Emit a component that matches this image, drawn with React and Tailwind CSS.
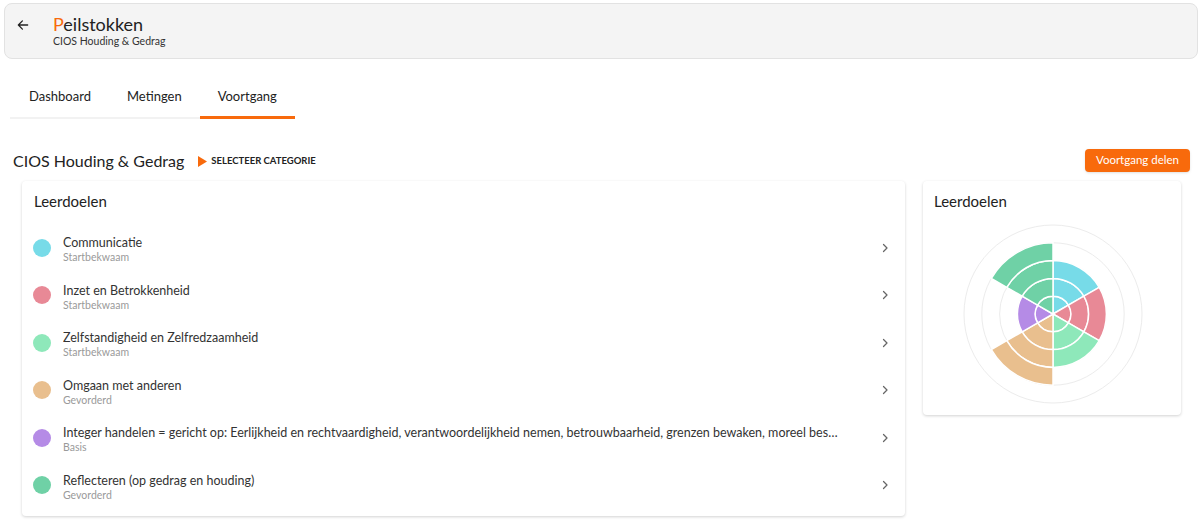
import React from "react";

const items = [
  { name: "Communicatie", level: "Startbekwaam", color: "#77dbe8" },
  { name: "Inzet en Betrokkenheid", level: "Startbekwaam", color: "#e88996" },
  { name: "Zelfstandigheid en Zelfredzaamheid", level: "Startbekwaam", color: "#8ee8ba" },
  { name: "Omgaan met anderen", level: "Gevorderd", color: "#e9bf8e" },
  {
    name:
      "Integer handelen = gericht op: Eerlijkheid en rechtvaardigheid, verantwoordelijkheid nemen, betrouwbaarheid, grenzen bewaken, moreel besef en integriteit tonen",
    level: "Basis",
    color: "#b58be6",
  },
  { name: "Reflecteren (op gedrag en houding)", level: "Gevorderd", color: "#6fd1a6" },
];

const levels = [3, 3, 3, 4, 2, 4];

function pt(cx, cy, r, a) {
  const rad = (a * Math.PI) / 180;
  return [cx + r * Math.sin(rad), cy - r * Math.cos(rad)];
}

function sector(cx, cy, r0, r1, a0, a1) {
  const [x0, y0] = pt(cx, cy, r1, a0);
  const [x1, y1] = pt(cx, cy, r1, a1);
  const [x2, y2] = pt(cx, cy, r0, a1);
  const [x3, y3] = pt(cx, cy, r0, a0);
  if (r0 === 0) {
    return `M${cx},${cy} L${x0},${y0} A${r1},${r1} 0 0 1 ${x1},${y1} Z`;
  }
  return `M${x0},${y0} A${r1},${r1} 0 0 1 ${x1},${y1} L${x2},${y2} A${r0},${r0} 0 0 0 ${x3},${y3} Z`;
}

function Chart() {
  const cx = 100, cy = 100, step = 17.8;
  const paths = [];
  items.forEach((it, i) => {
    for (let k = 0; k < levels[i]; k++) {
      paths.push(
        <path
          key={`${i}-${k}`}
          d={sector(cx, cy, k * step, (k + 1) * step, i * 60, (i + 1) * 60)}
          fill={it.color}
          stroke="#ffffff"
          strokeWidth="1.5"
        />
      );
    }
  });
  return (
    <svg width="200" height="200" viewBox="0 0 200 200">
      {[1, 2, 3, 4, 5].map((k) => (
        <circle key={k} cx={cx} cy={cy} r={k * step} fill="none" stroke="#ececec" strokeWidth="1" />
      ))}
      {paths}
    </svg>
  );
}

export default function App() {
  return (
    <div className="w-[1204px] h-[528px] bg-white text-[#333] overflow-hidden" style={{ fontFamily: "Lato, 'Open Sans', sans-serif" }}>
      <div className="pt-[3px] px-[4px] pr-[6px]">
        <div className="h-[56px] rounded-lg border border-[#e2e2e2] bg-[#f4f4f4] flex items-center">
          <svg className="ml-[11px] mt-[-12px]" width="14" height="14" viewBox="0 0 24 24" fill="none" stroke="#222" strokeWidth="2.2" strokeLinecap="round" strokeLinejoin="round">
            <path d="M20 12H4M11 5l-7 7 7 7" />
          </svg>
          <div className="ml-[23px] flex flex-col mt-[-2px]">
            <div className="text-[18px] leading-[22px] text-[#222]">
              <span className="text-[#f86a0c]">P</span>eilstokken
            </div>
            <div className="text-[10.5px] leading-[13px] text-[#333]">CIOS Houding &amp; Gedrag</div>
          </div>
        </div>
      </div>

      <div className="mt-[19px] ml-[10px] flex">
        <div className="flex flex-col">
          <div className="pl-[19px] pr-[18px] h-[38px] flex items-center text-[13px] text-[#222]">Dashboard</div>
          <div className="h-[3px] flex items-end"><div className="h-[2px] w-full bg-[#f2f2f2]" /></div>
        </div>
        <div className="flex flex-col">
          <div className="px-[18px] h-[38px] flex items-center text-[13px] text-[#222]">Metingen</div>
          <div className="h-[3px] flex items-end"><div className="h-[2px] w-full bg-[#f2f2f2]" /></div>
        </div>
        <div className="flex flex-col">
          <div className="px-[18px] h-[38px] flex items-center text-[13px] text-[#222]">Voortgang</div>
          <div className="h-[3px] bg-[#f86a0c]" />
        </div>
      </div>

      <div className="mt-[29px] pl-[13px] pr-[14px] flex items-center justify-between h-[24px]">
        <div className="flex items-center">
          <div className="text-[16px] text-[#222] mt-[2px]">CIOS Houding &amp; Gedrag</div>
          <div className="ml-[14px] flex items-center mt-[2px]">
            <svg width="10" height="11" viewBox="0 0 10 11"><path d="M0 0 L9 5.5 L0 11 Z" fill="#f86a0c" /></svg>
            <span className="ml-[3px] text-[9.5px] font-bold text-[#222]">SELECTEER CATEGORIE</span>
          </div>
        </div>
        <button className="h-[23px] px-[11px] rounded bg-[#f86a0c] text-white text-[11.5px] shadow-sm">Voortgang delen</button>
      </div>

      <div className="mt-[9px] pl-[22px] pr-[23px] flex gap-[18px] items-start">
        <div className="w-[883px] rounded bg-white shadow-[0_1px_3px_rgba(0,0,0,0.18)] pb-[7px]">
          <div className="pl-[12px] pt-[9px] h-[43px] text-[15px] text-[#222]">Leerdoelen</div>
          {items.map((it) => (
            <div key={it.name} className="h-[47.5px] flex items-center pl-[11px] pr-[14px]">
              <div className="w-[18px] h-[18px] rounded-full shrink-0" style={{ backgroundColor: it.color }} />
              <div className="ml-[12px] flex-1 min-w-0 pr-[36px] pt-[4px]">
                <div className="text-[12.5px] leading-[15px] text-[#333] truncate">{it.name}</div>
                <div className="text-[10.5px] leading-[14px] text-[#9a9a9a]">{it.level}</div>
              </div>
              <svg width="12" height="12" viewBox="0 0 24 24" fill="none" stroke="#666" strokeWidth="2.5" strokeLinecap="round" strokeLinejoin="round">
                <path d="M9 5l7 7-7 7" />
              </svg>
            </div>
          ))}
        </div>
        <div className="w-[258px] h-[234px] rounded bg-white shadow-[0_1px_3px_rgba(0,0,0,0.18)] flex flex-col">
          <div className="pl-[11px] pt-[9px] text-[15px] text-[#222]">Leerdoelen</div>
          <div className="flex justify-center mt-[1px] ml-[1px]">
            <Chart />
          </div>
        </div>
      </div>
    </div>
  );
}
